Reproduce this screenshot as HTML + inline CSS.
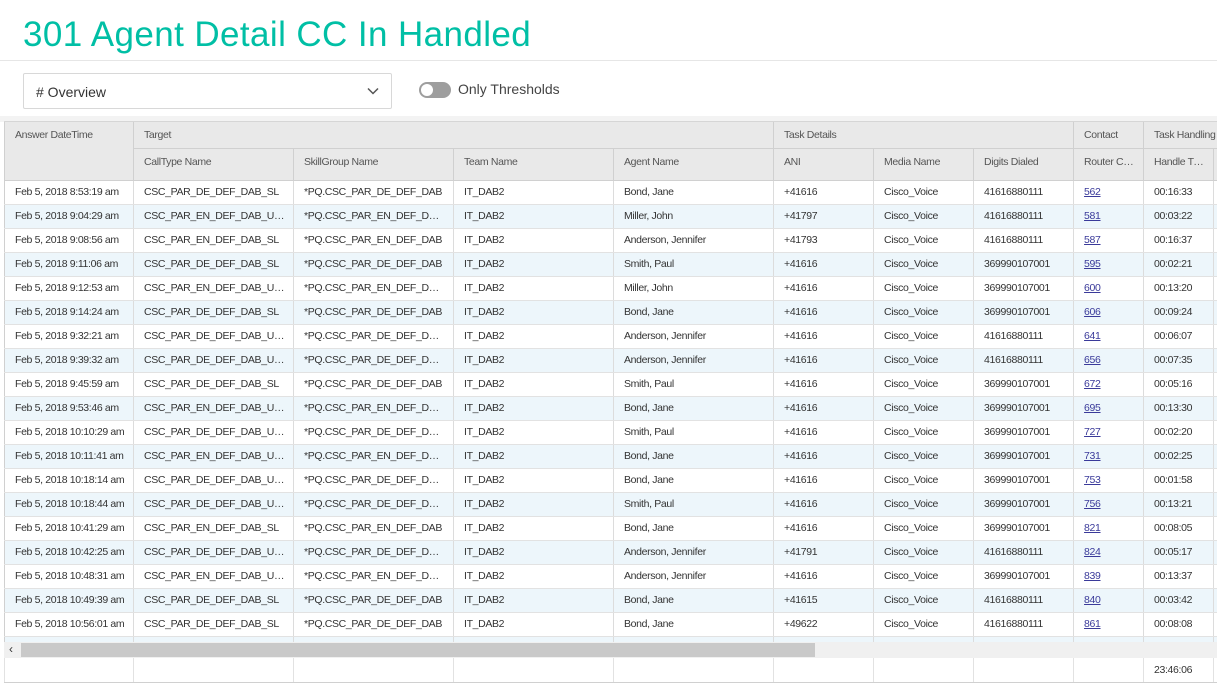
<!DOCTYPE html>
<html><head><meta charset="utf-8"><style>
*{margin:0;padding:0;box-sizing:border-box}
body{width:1217px;height:685px;overflow:hidden;background:#fff;font-family:"Liberation Sans",sans-serif;position:relative}
h1{position:absolute;left:23px;top:15px;font-size:35px;font-weight:normal;color:#00bfa5;letter-spacing:0.4px;white-space:nowrap}
.hr{position:absolute;left:0;top:60px;width:1217px;height:1px;background:#e6e6e6}
.sel{position:absolute;left:23px;top:73px;width:369px;height:36px;border:1px solid #d8d8d8;border-radius:2px;font-size:14px;color:#333;padding:10px 12px}
.sel svg{position:absolute;right:12px;top:13px}
.tog{position:absolute;left:419px;top:82px;width:32px;height:16px;border-radius:8px;background:#9e9e9e}
.tog:after{content:"";position:absolute;left:2px;top:2px;width:12px;height:12px;border-radius:50%;background:#fff}
.tl{position:absolute;left:458px;top:81px;font-size:14px;color:#444}
.band{position:absolute;left:0;top:116px;width:1217px;height:6px;background:#f3f3f3}
.wrap{position:absolute;left:4px;top:121px;width:1213px;height:521px;overflow:hidden;border-top:1px solid #d6d6d6}
table{border-collapse:collapse;table-layout:fixed;width:1300px;font-size:10.5px;letter-spacing:-0.35px;color:#333}
td,th{border-right:1px solid #dcdcdc;border-bottom:1px solid #e2e2e2;padding:0 8px 0 10px;white-space:nowrap;overflow:hidden;text-overflow:ellipsis;text-align:left;font-weight:normal}
th{background:#e9e9e9;color:#555;border-right:1px solid #d0d0d0;border-bottom:1px solid #d0d0d0;vertical-align:top}
.h1 th{height:26px;padding-top:7px}
.h2 th{height:32px;padding-top:7px}
td{height:24px}
tr.a td{background:#edf6fb}
td:first-child,th:first-child{border-left:1px solid #d0d0d0}
a{color:#3a3a9a;text-decoration:underline}
.sb{position:absolute;left:4px;top:642px;width:1213px;height:16px;background:#f0f0f0}
.sb .th{position:absolute;left:17px;top:1px;width:794px;height:14px;background:#c9c9c9}
.sb span{position:absolute;left:5px;top:0;font-size:12px;color:#333}
.ft{position:absolute;left:4px;top:658px;height:25px;width:1213px;border-bottom:1px solid #d0d0d0}
.ft div{position:absolute;top:0;height:24px;border-right:1px solid #e2e2e2}
.ft .v{position:absolute;left:1150px;top:6px;font-size:10.5px;letter-spacing:-0.35px;color:#333}
</style></head><body>
<h1>301 Agent Detail CC In Handled</h1>
<div class="hr"></div>
<div class="sel"># Overview<svg width="12" height="8" viewBox="0 0 12 8"><path d="M1 1.5L6 6.5L11 1.5" fill="none" stroke="#555" stroke-width="1.5"/></svg></div>
<div class="tog"></div><div class="tl">Only Thresholds</div>
<div class="band"></div>
<div class="wrap"><table>
<colgroup><col style="width:129px"><col style="width:160px"><col style="width:160px"><col style="width:160px"><col style="width:160px"><col style="width:100px"><col style="width:100px"><col style="width:100px"><col style="width:70px"><col style="width:70px"><col style="width:91px"></colgroup>
<tr class="h1"><th rowspan="2">Answer DateTime</th><th colspan="4">Target</th><th colspan="3">Task Details</th><th>Contact</th><th colspan="2">Task Handling</th></tr>
<tr class="h2"><th>CallType Name</th><th>SkillGroup Name</th><th>Team Name</th><th>Agent Name</th><th>ANI</th><th>Media Name</th><th>Digits Dialed</th><th>Router Call Key</th><th>Handle Time</th><th></th></tr>
<tr><td>Feb 5, 2018 8:53:19 am</td><td>CSC_PAR_DE_DEF_DAB_SL</td><td>*PQ.CSC_PAR_DE_DEF_DAB</td><td>IT_DAB2</td><td>Bond, Jane</td><td>+41616</td><td>Cisco_Voice</td><td>41616880111</td><td><a>562</a></td><td>00:16:33</td><td></td></tr>
<tr class="a"><td>Feb 5, 2018 9:04:29 am</td><td>CSC_PAR_EN_DEF_DAB_US2xx</td><td>*PQ.CSC_PAR_EN_DEF_DAB_xx</td><td>IT_DAB2</td><td>Miller, John</td><td>+41797</td><td>Cisco_Voice</td><td>41616880111</td><td><a>581</a></td><td>00:03:22</td><td></td></tr>
<tr><td>Feb 5, 2018 9:08:56 am</td><td>CSC_PAR_EN_DEF_DAB_SL</td><td>*PQ.CSC_PAR_EN_DEF_DAB</td><td>IT_DAB2</td><td>Anderson, Jennifer</td><td>+41793</td><td>Cisco_Voice</td><td>41616880111</td><td><a>587</a></td><td>00:16:37</td><td></td></tr>
<tr class="a"><td>Feb 5, 2018 9:11:06 am</td><td>CSC_PAR_DE_DEF_DAB_SL</td><td>*PQ.CSC_PAR_DE_DEF_DAB</td><td>IT_DAB2</td><td>Smith, Paul</td><td>+41616</td><td>Cisco_Voice</td><td>369990107001</td><td><a>595</a></td><td>00:02:21</td><td></td></tr>
<tr><td>Feb 5, 2018 9:12:53 am</td><td>CSC_PAR_EN_DEF_DAB_US1xx</td><td>*PQ.CSC_PAR_EN_DEF_DAB_xx</td><td>IT_DAB2</td><td>Miller, John</td><td>+41616</td><td>Cisco_Voice</td><td>369990107001</td><td><a>600</a></td><td>00:13:20</td><td></td></tr>
<tr class="a"><td>Feb 5, 2018 9:14:24 am</td><td>CSC_PAR_DE_DEF_DAB_SL</td><td>*PQ.CSC_PAR_DE_DEF_DAB</td><td>IT_DAB2</td><td>Bond, Jane</td><td>+41616</td><td>Cisco_Voice</td><td>369990107001</td><td><a>606</a></td><td>00:09:24</td><td></td></tr>
<tr><td>Feb 5, 2018 9:32:21 am</td><td>CSC_PAR_DE_DEF_DAB_US2xx</td><td>*PQ.CSC_PAR_DE_DEF_DAB_xx</td><td>IT_DAB2</td><td>Anderson, Jennifer</td><td>+41616</td><td>Cisco_Voice</td><td>41616880111</td><td><a>641</a></td><td>00:06:07</td><td></td></tr>
<tr class="a"><td>Feb 5, 2018 9:39:32 am</td><td>CSC_PAR_DE_DEF_DAB_US2xx</td><td>*PQ.CSC_PAR_DE_DEF_DAB_xx</td><td>IT_DAB2</td><td>Anderson, Jennifer</td><td>+41616</td><td>Cisco_Voice</td><td>41616880111</td><td><a>656</a></td><td>00:07:35</td><td></td></tr>
<tr><td>Feb 5, 2018 9:45:59 am</td><td>CSC_PAR_DE_DEF_DAB_SL</td><td>*PQ.CSC_PAR_DE_DEF_DAB</td><td>IT_DAB2</td><td>Smith, Paul</td><td>+41616</td><td>Cisco_Voice</td><td>369990107001</td><td><a>672</a></td><td>00:05:16</td><td></td></tr>
<tr class="a"><td>Feb 5, 2018 9:53:46 am</td><td>CSC_PAR_EN_DEF_DAB_US2xx</td><td>*PQ.CSC_PAR_EN_DEF_DAB_xx</td><td>IT_DAB2</td><td>Bond, Jane</td><td>+41616</td><td>Cisco_Voice</td><td>369990107001</td><td><a>695</a></td><td>00:13:30</td><td></td></tr>
<tr><td>Feb 5, 2018 10:10:29 am</td><td>CSC_PAR_DE_DEF_DAB_US2xx</td><td>*PQ.CSC_PAR_DE_DEF_DAB_xx</td><td>IT_DAB2</td><td>Smith, Paul</td><td>+41616</td><td>Cisco_Voice</td><td>369990107001</td><td><a>727</a></td><td>00:02:20</td><td></td></tr>
<tr class="a"><td>Feb 5, 2018 10:11:41 am</td><td>CSC_PAR_EN_DEF_DAB_US1xx</td><td>*PQ.CSC_PAR_EN_DEF_DAB_xx</td><td>IT_DAB2</td><td>Bond, Jane</td><td>+41616</td><td>Cisco_Voice</td><td>369990107001</td><td><a>731</a></td><td>00:02:25</td><td></td></tr>
<tr><td>Feb 5, 2018 10:18:14 am</td><td>CSC_PAR_DE_DEF_DAB_US1xx</td><td>*PQ.CSC_PAR_DE_DEF_DAB_xx</td><td>IT_DAB2</td><td>Bond, Jane</td><td>+41616</td><td>Cisco_Voice</td><td>369990107001</td><td><a>753</a></td><td>00:01:58</td><td></td></tr>
<tr class="a"><td>Feb 5, 2018 10:18:44 am</td><td>CSC_PAR_DE_DEF_DAB_US1xx</td><td>*PQ.CSC_PAR_DE_DEF_DAB_xx</td><td>IT_DAB2</td><td>Smith, Paul</td><td>+41616</td><td>Cisco_Voice</td><td>369990107001</td><td><a>756</a></td><td>00:13:21</td><td></td></tr>
<tr><td>Feb 5, 2018 10:41:29 am</td><td>CSC_PAR_EN_DEF_DAB_SL</td><td>*PQ.CSC_PAR_EN_DEF_DAB</td><td>IT_DAB2</td><td>Bond, Jane</td><td>+41616</td><td>Cisco_Voice</td><td>369990107001</td><td><a>821</a></td><td>00:08:05</td><td></td></tr>
<tr class="a"><td>Feb 5, 2018 10:42:25 am</td><td>CSC_PAR_DE_DEF_DAB_US2xx</td><td>*PQ.CSC_PAR_DE_DEF_DAB_xx</td><td>IT_DAB2</td><td>Anderson, Jennifer</td><td>+41791</td><td>Cisco_Voice</td><td>41616880111</td><td><a>824</a></td><td>00:05:17</td><td></td></tr>
<tr><td>Feb 5, 2018 10:48:31 am</td><td>CSC_PAR_EN_DEF_DAB_US1xx</td><td>*PQ.CSC_PAR_EN_DEF_DAB_xx</td><td>IT_DAB2</td><td>Anderson, Jennifer</td><td>+41616</td><td>Cisco_Voice</td><td>369990107001</td><td><a>839</a></td><td>00:13:37</td><td></td></tr>
<tr class="a"><td>Feb 5, 2018 10:49:39 am</td><td>CSC_PAR_DE_DEF_DAB_SL</td><td>*PQ.CSC_PAR_DE_DEF_DAB</td><td>IT_DAB2</td><td>Bond, Jane</td><td>+41615</td><td>Cisco_Voice</td><td>41616880111</td><td><a>840</a></td><td>00:03:42</td><td></td></tr>
<tr><td>Feb 5, 2018 10:56:01 am</td><td>CSC_PAR_DE_DEF_DAB_SL</td><td>*PQ.CSC_PAR_DE_DEF_DAB</td><td>IT_DAB2</td><td>Bond, Jane</td><td>+49622</td><td>Cisco_Voice</td><td>41616880111</td><td><a>861</a></td><td>00:08:08</td><td></td></tr>
<tr class="a"><td></td><td></td><td></td><td></td><td></td><td></td><td></td><td></td><td></td><td></td><td></td></tr>
</table></div>
<div class="sb"><span>‹</span><div class="th"></div></div>
<div class="ft">
<div style="left:0;width:1px;background:#d0d0d0"></div>
<div style="left:0;width:130px"></div><div style="left:130px;width:160px"></div><div style="left:290px;width:160px"></div><div style="left:450px;width:160px"></div><div style="left:610px;width:160px"></div><div style="left:770px;width:100px"></div><div style="left:870px;width:100px"></div><div style="left:970px;width:100px"></div><div style="left:1070px;width:70px"></div><div style="left:1140px;width:70px"></div>
<span class="v">23:46:06</span></div>
</body></html>
